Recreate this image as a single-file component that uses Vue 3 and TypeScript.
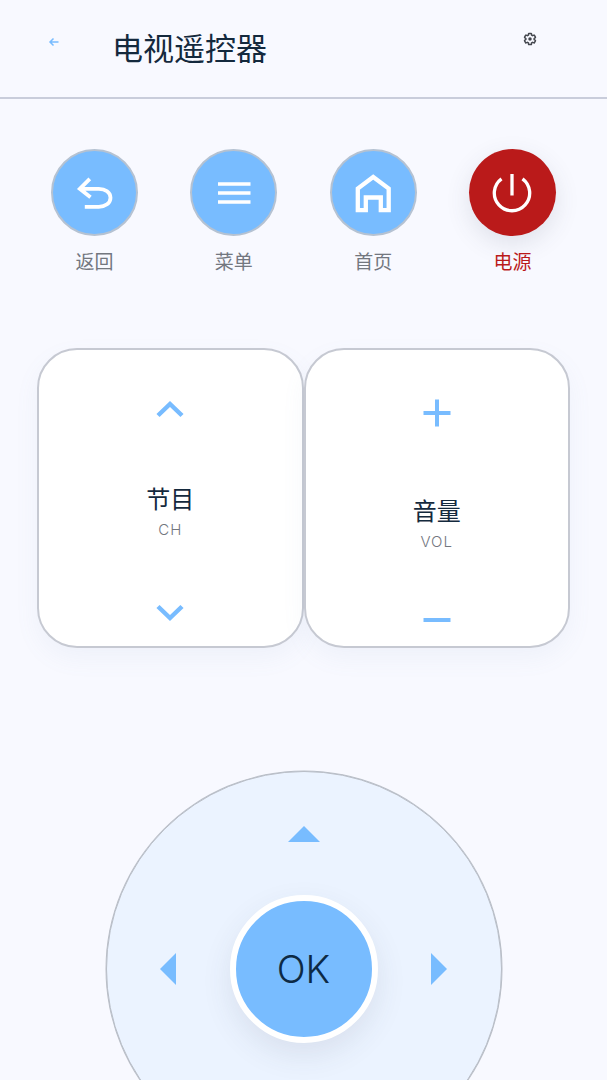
<script setup lang="ts">
const actions = [
  { key: 'back', label: '返回' },
  { key: 'menu', label: '菜单' },
  { key: 'home', label: '首页' },
  { key: 'power', label: '电源' },
]
</script>

<template>
  <div class="page">
    <header class="topbar">
      <svg class="back" viewBox="0 0 12 12" width="12" height="12">
        <path d="M10.500 6H2M5.500 2.500 2 6l3.500 3.500" fill="none" stroke="#78bcff" stroke-width="1.500" />
      </svg>
      <h1 class="title">电视遥控器</h1>
      <svg class="gear" viewBox="0 0 24 24" width="14" height="14">
        <path
          fill="none"
          stroke="#44474e"
          stroke-width="2.600"
          d="M19.14 12.94c.04-.3.06-.61.06-.94 0-.32-.02-.64-.07-.94l2.03-1.58c.18-.14.23-.41.12-.61l-1.92-3.32c-.12-.22-.37-.29-.59-.22l-2.39.96c-.5-.38-1.03-.7-1.62-.94L14.4 2.81c-.04-.24-.24-.41-.48-.41h-3.84c-.24 0-.43.17-.47.41L9.25 5.35c-.59.24-1.13.57-1.62.94l-2.39-.96c-.22-.08-.47 0-.59.22L2.74 8.87c-.12.21-.08.47.12.61l2.03 1.58c-.05.3-.09.63-.09.94s.02.64.07.94l-2.03 1.58c-.18.14-.23.41-.12.61l1.92 3.32c.12.22.37.29.59.22l2.39-.96c.5.38 1.03.7 1.62.94l.36 2.54c.05.24.24.41.48.41h3.84c.24 0 .44-.17.47-.41l.36-2.54c.59-.24 1.13-.56 1.62-.94l2.39.96c.22.08.47 0 .59-.22l1.92-3.32c.12-.22.07-.47-.12-.61l-2.01-1.58z"
        />
        <circle cx="12" cy="12" r="3" fill="#44474e" />
      </svg>
    </header>

    <section class="actions">
      <div v-for="a in actions" :key="a.key" class="action" :class="{ danger: a.key === 'power' }">
        <button class="round">
          <svg viewBox="0 0 48 48" width="48" height="48" fill="none" stroke="#fff">
            <path
              v-if="a.key === 'back'"
              stroke-width="3.800"
              d="M18.800 9.800 8.800 19.800l10.700 8.400M8.800 19.800h19c6.500 0 11.700 3.600 11.700 9s-5.200 9-11.700 9h-14"
            />
            <path v-if="a.key === 'menu'" stroke-width="3.600" d="M8 15h32.500M8 24h32.500M8 33h32.500" />
            <path
              v-if="a.key === 'home'"
              stroke-width="4.300"
              d="M8.800 41.200V19.500L24.200 8 39.700 19.500v21.700h-7.900V28.500H16.800v12.700z"
            />
            <template v-if="a.key === 'power'">
              <path stroke-width="3.300" d="M24 5v21.500" />
              <path stroke-width="3.300" d="M13.500 9.800A17.700 17.700 0 1 0 34.500 9.800" />
            </template>
          </svg>
        </button>
        <span class="action-label">{{ a.label }}</span>
      </div>
    </section>

    <section class="rockers">
      <div class="rocker ch">
        <svg viewBox="0 0 28 28" width="28" height="28" fill="none" stroke="#78bcff" stroke-width="4.500">
          <path d="M2 20.500 14 9 26 20.500" />
        </svg>
        <div class="rocker-text">
          <span class="rocker-name">节目</span>
          <span class="rocker-code">CH</span>
        </div>
        <svg viewBox="0 0 28 28" width="28" height="28" fill="none" stroke="#78bcff" stroke-width="4.500">
          <path d="M2 7.500 14 19 26 7.500" />
        </svg>
      </div>
      <div class="rocker vol">
        <svg viewBox="0 0 28 28" width="28" height="28" fill="none" stroke="#78bcff" stroke-width="4">
          <path d="M14 .500v27M.500 14h27" />
        </svg>
        <div class="rocker-text">
          <span class="rocker-name">音量</span>
          <span class="rocker-code">VOL</span>
        </div>
        <svg viewBox="0 0 28 28" width="28" height="28" fill="none" stroke="#78bcff" stroke-width="4">
          <path d="M.500 14h27" />
        </svg>
      </div>
    </section>

    <section class="dpad">
      <span class="tri up"></span>
      <span class="tri left"></span>
      <button class="ok">OK</button>
      <span class="tri right"></span>
    </section>
  </div>
</template>

<style>
html,
body {
  margin: 0;
  background: #f8f9ff;
}
</style>

<style scoped>
.page {
  height: 1080px;
  overflow: hidden;
  background: #f8f9ff;
  display: flex;
  flex-direction: column;
  font-family: Inter, "Noto Sans CJK SC", sans-serif;
}

.topbar {
  height: 97px;
  border-bottom: 2px solid #c9cddb;
  display: flex;
  align-items: center;
  flex: none;
}

.back {
  margin-left: 48px;
  margin-top: -14px;
  flex: none;
}

.title {
  margin: 0 0 0 52px;
  flex: 1;
  font-size: 31px;
  line-height: 40px;
  font-weight: 400;
  color: #14293d;
}

.gear {
  margin-right: 70px;
  margin-top: -19px;
  flex: none;
}

.actions {
  margin-top: 50px;
  padding: 0 51px;
  display: flex;
  justify-content: space-between;
}

.action {
  width: 87px;
  display: flex;
  flex-direction: column;
  align-items: center;
  gap: 12px;
}

.round {
  width: 87px;
  height: 87px;
  padding: 0;
  box-sizing: border-box;
  border: 2px solid #b5c2d2;
  border-radius: 50%;
  background: #78bcff;
  display: flex;
  align-items: center;
  justify-content: center;
}

.danger .round {
  border: none;
  background: #ba1a1a;
  box-shadow: 0 8px 24px rgba(60, 70, 90, 0.13);
}

.action-label {
  margin-top: 2px;
  font-size: 19px;
  line-height: 26px;
  color: #73777f;
}

.danger .action-label {
  color: #ba1a1a;
}

.rockers {
  margin-top: 72px;
  padding: 0 37px;
  display: flex;
}

.rocker {
  flex: 1;
  height: 300px;
  box-sizing: border-box;
  background: #fff;
  border: 2px solid #c6c9d2;
  border-radius: 40px;
  box-shadow: 0 10px 24px rgba(120, 140, 190, 0.07);
  display: flex;
  flex-direction: column;
  align-items: center;
  justify-content: space-between;
}

.rocker.ch {
  padding: 44.500px 0 19px;
}

.rocker.vol {
  padding: 49px 0 12.500px;
}

.rocker-text {
  display: flex;
  flex-direction: column;
  align-items: center;
}

.ch .rocker-text {
  margin-top: 4.500px;
}

.vol .rocker-text {
  margin-top: 17px;
}

.rocker-name {
  font-size: 24px;
  line-height: 32px;
  color: #14293d;
}

.rocker-code {
  margin-top: 2px;
  font-size: 15px;
  line-height: 24px;
  font-weight: 300;
  letter-spacing: 1px;
  color: #73777f;
}

.dpad {
  margin: 123px auto 0;
  width: 396px;
  height: 396px;
  flex: none;
  box-sizing: border-box;
  border: 1px solid #b9bec7;
  box-shadow: 0 0 0 0.500px #b9bec7;
  border-radius: 50%;
  background: #ebf3ff;
  display: grid;
  grid-template-columns: 1fr 148px 1fr;
  grid-template-rows: 1fr 148px 1fr;
  place-items: center;
}

.tri {
  width: 0;
  height: 0;
}

.tri.up {
  grid-column: 2;
  grid-row: 1;
  border-left: 16px solid transparent;
  border-right: 16px solid transparent;
  border-bottom: 16px solid #78bcff;
}

.tri.left {
  grid-column: 1;
  grid-row: 2;
  border-top: 16px solid transparent;
  border-bottom: 16px solid transparent;
  border-right: 16px solid #78bcff;
}

.tri.right {
  grid-column: 3;
  grid-row: 2;
  border-top: 16px solid transparent;
  border-bottom: 16px solid transparent;
  border-left: 16px solid #78bcff;
}

.ok {
  grid-column: 2;
  grid-row: 2;
  width: 148px;
  height: 148px;
  padding: 0;
  box-sizing: border-box;
  border: 6px solid #fff;
  border-radius: 50%;
  background: #78bcff;
  box-shadow: 0 12px 30px rgba(60, 70, 90, 0.1);
  font-family: Inter, sans-serif;
  font-size: 38px;
  font-weight: 300;
  color: #0d2a45;
}
</style>
